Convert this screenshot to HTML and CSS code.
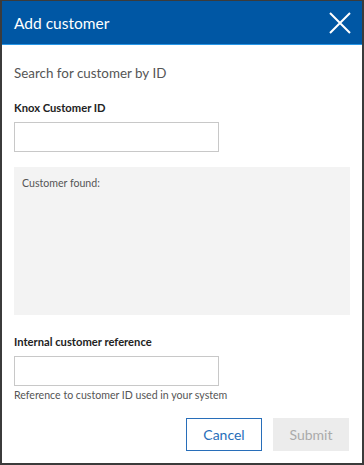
FILE: index.html
```html
<!DOCTYPE html>
<html lang="en">
<head>
    <meta charset="UTF-8">
    <meta name="viewport" content="width=device-width, initial-scale=1.0">
    <title>Add customer</title>
    <link rel="stylesheet" href="styles.css">
</head>
<body>
   <div class="dialog">
       <div class="top">
           <div>Add customer</div>
           <div class="close">
               <svg width="22" height="22" viewBox="0 0 22 22"><path d="M1 1L21 21M21 1L1 21" stroke="#fff" stroke-width="2" fill="none"/></svg>
           </div>
       </div>
       <div class="body">
           <div class="intro">Search for customer by ID</div>
           <div class="label">Knox Customer ID</div>
           <input class="field" type="text">
           <div class="found">Customer found:</div>
           <div class="label second">Internal customer reference</div>
           <input class="field" type="text">
           <div class="hint">Reference to customer ID used in your system</div>
           <div class="buttons">
               <div class="btn cancel">Cancel</div>
               <div class="btn submit">Submit</div>
           </div>
       </div>
   </div>
</body>
</html>
```

FILE: styles.css
```css
*{
    margin: 0;
    padding: 0;
    box-sizing: border-box;
}
body{
    font-family: Lato, "Open Sans", sans-serif;
    background: #fff;
}
.dialog{
    width: 364px;
    height: 465px;
    border: 2px solid #3b3b3b;
    border-top-width: 1px;
    display: flex;
    flex-direction: column;
}
.top{
    display: flex;
    height: 44px;
    background-color: rgb(0, 87, 164);
    border-bottom: 1px solid rgb(40, 150, 230);
    justify-content: space-between;
    align-items: center;
    color: white;
    font-size: 15.5px;
    padding: 0 11px 0 12px;
}
.close{
    display: flex;
}
.body{
    display: flex;
    flex-direction: column;
    padding: 0 12px;
    color: #555;
}
.intro{
    margin-top: 20px;
    font-size: 13.4px;
}
.label{
    margin-top: 20px;
    font-size: 11.2px;
    font-weight: bold;
    color: #222;
}
.label.second{
    margin-top: 20px;
}
.field{
    margin-top: 8px;
    width: 205px;
    height: 30px;
    border: 1px solid #c8c8c8;
    background: #fff;
}
.found{
    margin-top: 15px;
    height: 148px;
    background: #f3f3f3;
    font-size: 10.6px;
    padding: 10px 8px;
}
.hint{
    margin-top: 3px;
    font-size: 10.6px;
    color: #555;
}
.buttons{
    display: flex;
    justify-content: flex-end;
    gap: 11px;
    margin-top: 17px;
    padding-right: 1px;
}
.btn{
    display: flex;
    width: 76px;
    height: 33px;
    justify-content: center;
    align-items: center;
    font-size: 14px;
}
.cancel{
    border: 1px solid rgb(40, 110, 185);
    color: rgb(40, 110, 185);
}
.submit{
    background: #ececec;
    color: #aaa;
}
```
